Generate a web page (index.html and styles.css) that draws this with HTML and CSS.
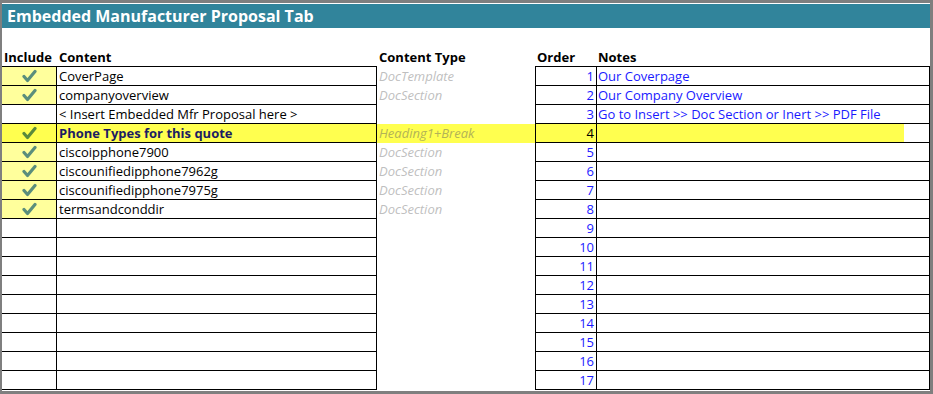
FILE: index.html
```html
<!DOCTYPE html>
<html>
<head>
<meta charset="utf-8">
<link rel="stylesheet" href="styles.css">
</head>
<body>
<div class="frame">
  <div class="title">Embedded Manufacturer Proposal Tab</div>
  <div class="labels">
    <div class="lab lab-inc">Include</div>
    <div class="lab lab-con">Content</div>
    <div class="lab lab-typ">Content Type</div>
    <div class="lab lab-ord">Order</div>
    <div class="lab lab-not">Notes</div>
  </div>
  <div class="sheet" id="sheet"></div>
</div>
<script src="app.js"></script>
</body>
</html>
```
FILE: styles.css
```css
html, body { margin: 0; padding: 0; }
body {
  background: #7f7f7f;
  width: 933px;
  height: 394px;
  overflow: hidden;
  font-family: "Open Sans", "Liberation Sans", sans-serif;
}
.frame {
  margin: 3px 3px 0 2px;
  padding-top: 1px;
  width: 928px;
  height: 387px;
  background: #fff;
  overflow: hidden;
}
.title {
  height: 24px;
  background: #31849b;
  color: #fff;
  font-weight: 700;
  font-size: 16px;
  line-height: 24px;
  padding-left: 5px;
}
.labels {
  display: grid;
  grid-template-columns: 55px 320px 158px 62px 333px;
  height: 38px;
  align-items: end;
}
.lab {
  font-weight: 700;
  font-size: 13px;
  line-height: 18px;
  color: #000;
}
.lab-inc { padding-left: 2px; }
.lab-con { padding-left: 2px; }
.lab-typ { padding-left: 2px; }
.lab-ord { padding-left: 2px; }
.lab-not { padding-left: 1px; }
.sheet {
  display: grid;
  grid-template-columns: 55px 320px 158px 62px 333px;
  grid-template-rows: 20px;
  grid-auto-rows: 19px;
}
.c {
  box-sizing: border-box;
  height: 19px;
  font-size: 13px;
  line-height: 18px;
  white-space: nowrap;
  overflow: hidden;
}
.r1 { border-top: 1px solid #000; height: 20px; }
.inc {
  border-right: 1px solid #000;
  border-bottom: 1px solid #000;
  display: flex;
  align-items: center;
  justify-content: center;
}
.inc.on { background: #ffff9c; }
.inc.hi { background: #ffff4f; }
.con {
  border-right: 1px solid #000;
  border-bottom: 1px solid #000;
  padding-left: 2px;
  color: #000;
}
.con.hi { background: #ffff4f; font-weight: 700; color: #1c1c62; }
.typ {
  padding-left: 2px;
  font-style: italic;
  color: #bfbfbf;
}
.typ.r1t { padding-top: 1px; height: 20px; }
.typ.hi { background: #ffff4f; color: #b3b357; }
.ord {
  border-left: 1px solid #000;
  border-right: 1px solid #000;
  border-bottom: 1px solid #000;
  text-align: right;
  padding-right: 2px;
  color: #1a1aff;
}
.ord.hi { background: #ffff4f; color: #000; }
.not {
  border-right: 1px solid #000;
  border-bottom: 1px solid #000;
  padding-left: 1px;
  color: #1a1aff;
}
.not.hi { background: linear-gradient(to right, #ffff4f 307px, #fff 307px); }
.chk { width: 15px; height: 14px; display: block; }
```
FILE: app.js
```js
const rows = [
  {inc:1, con:"CoverPage", typ:"DocTemplate", note:"Our Coverpage"},
  {inc:1, con:"companyoverview", typ:"DocSection", note:"Our Company Overview"},
  {inc:0, con:"< Insert Embedded Mfr Proposal here >", typ:"", note:"Go to Insert >> Doc Section or Inert >> PDF File"},
  {inc:1, con:"Phone Types for this quote", typ:"Heading1+Break", note:"", hi:1},
  {inc:1, con:"ciscoipphone7900", typ:"DocSection", note:""},
  {inc:1, con:"ciscounifiedipphone7962g", typ:"DocSection", note:""},
  {inc:1, con:"ciscounifiedipphone7975g", typ:"DocSection", note:""},
  {inc:1, con:"termsandconddir", typ:"DocSection", note:""}
];
const sheet = document.getElementById('sheet');
const chk = (c) => '<svg class="chk" viewBox="0 0 15 14"><path d="M2 7.5 L5.5 11.5 L13 2.5" fill="none" stroke="' + c + '" stroke-width="3.2" stroke-linecap="round" stroke-linejoin="round"/></svg>';
function cell(cls, html) {
  const d = document.createElement('div');
  d.className = 'c ' + cls;
  d.innerHTML = html;
  sheet.appendChild(d);
}
const esc = s => s.replace(/&/g,'&amp;').replace(/</g,'&lt;').replace(/>/g,'&gt;');
for (let i = 0; i < 17; i++) {
  const r = rows[i] || {inc:0, con:"", typ:"", note:""};
  const first = i === 0 ? ' r1' : '';
  const hi = r.hi ? ' hi' : '';
  cell('inc' + first + (r.inc ? (r.hi ? ' hi' : ' on') : ''), r.inc ? chk(r.hi ? '#5a8a3c' : '#5b8e7c') : '');
  cell('con' + first + hi, esc(r.con));
  cell('typ' + hi + (i === 0 ? ' r1t' : ''), esc(r.typ));
  cell('ord' + first + hi, String(i + 1));
  cell('not' + first + hi, esc(r.note));
}
```
